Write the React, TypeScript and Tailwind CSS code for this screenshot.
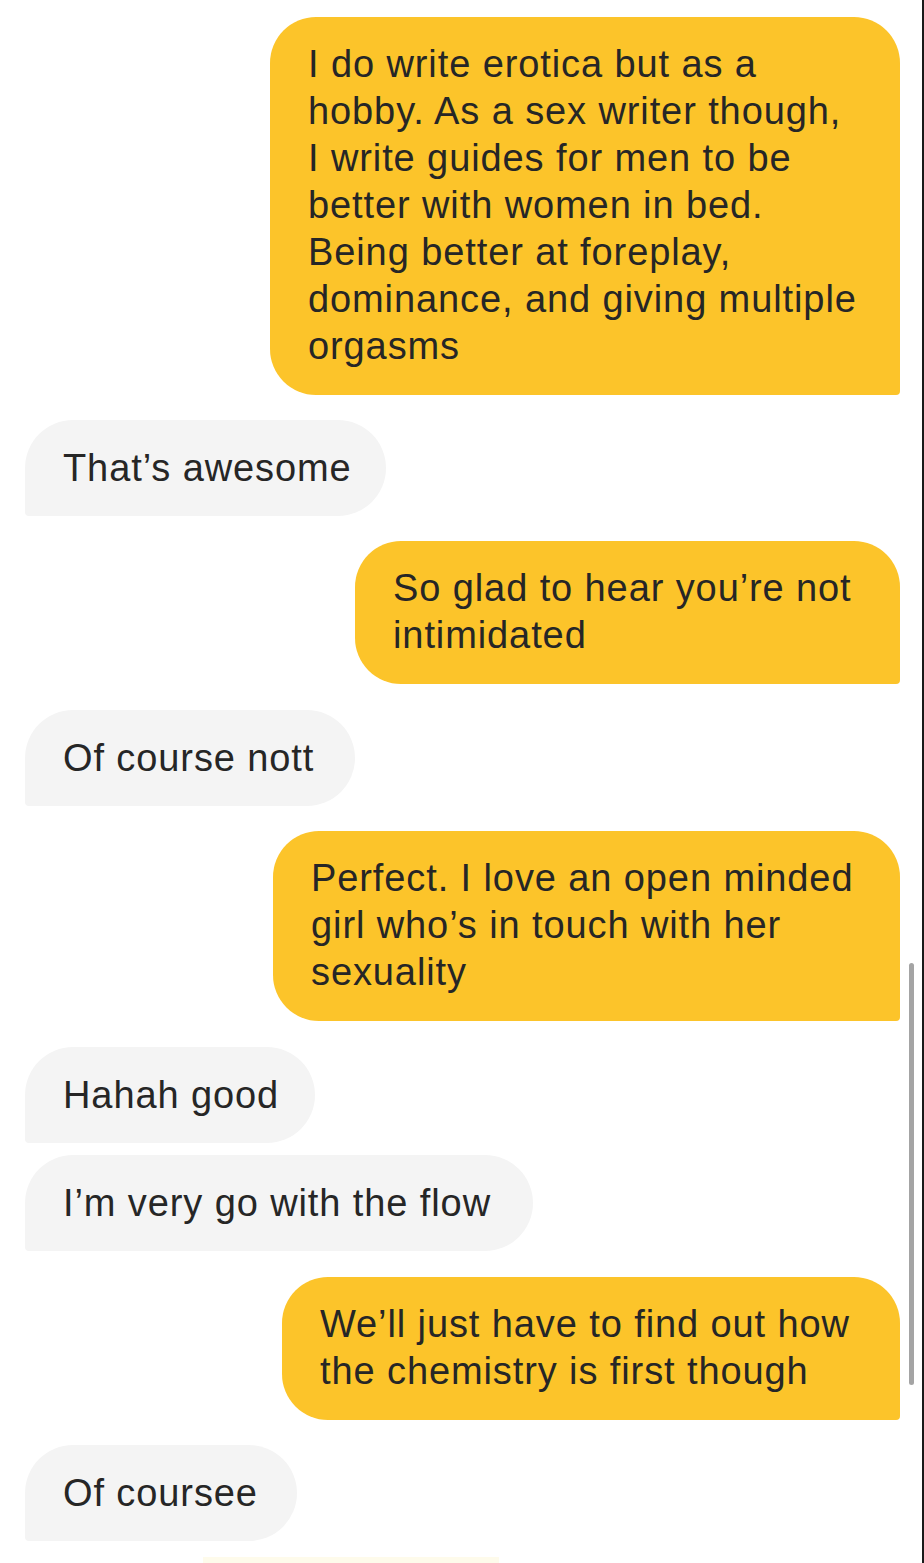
import React from 'react';

type Msg = {
  from: 'me' | 'them';
  lines: string[];
  width: number;
  gap: string;
};

const messages: Msg[] = [
  {
    from: 'me',
    lines: [
      'I do write erotica but as a',
      'hobby. As a sex writer though,',
      'I write guides for men to be',
      'better with women in bed.',
      'Being better at foreplay,',
      'dominance, and giving multiple',
      'orgasms',
    ],
    width: 630,
    gap: 'mt-0',
  },
  { from: 'them', lines: ['That\u2019s awesome'], width: 361, gap: 'mt-[25px]' },
  { from: 'me', lines: ['So glad to hear you\u2019re not', 'intimidated'], width: 545, gap: 'mt-[25px]' },
  { from: 'them', lines: ['Of course nott'], width: 330, gap: 'mt-[26px]' },
  {
    from: 'me',
    lines: ['Perfect. I love an open minded', 'girl who\u2019s in touch with her', 'sexuality'],
    width: 627,
    gap: 'mt-[25px]',
  },
  { from: 'them', lines: ['Hahah good'], width: 290, gap: 'mt-[26px]' },
  { from: 'them', lines: ['I\u2019m very go with the flow'], width: 508, gap: 'mt-[12px]' },
  {
    from: 'me',
    lines: ['We\u2019ll just have to find out how', 'the chemistry is first though'],
    width: 618,
    gap: 'mt-[26px]',
  },
  { from: 'them', lines: ['Of coursee'], width: 272, gap: 'mt-[25px]' },
];

function Bubble({ msg }: { msg: Msg }) {
  const mine = msg.from === 'me';
  return (
    <div
      className={`${msg.gap} ${
        mine
          ? 'self-end mr-[24px] bg-[#fcc42a] rounded-[46px] rounded-br-[4px] pt-[24px] pb-[25px]'
          : 'self-start ml-[25px] bg-[#f4f4f4] rounded-[48px] rounded-bl-[4px] py-[24.5px]'
      } pl-[38px] pr-[10px] text-[38px] tracking-[0.9px] leading-[47px] text-[#262626] whitespace-nowrap`}
      style={{ width: msg.width }}
    >
      {msg.lines.map((line, i) => (
        <div key={i}>{line}</div>
      ))}
    </div>
  );
}

export default function App() {
  return (
    <div
      className="relative w-[924px] h-[1563px] overflow-hidden bg-white flex flex-col pt-[17px]"
      style={{ fontFamily: '"Liberation Sans", Arial, sans-serif' }}
    >
      {messages.map((m, i) => (
        <Bubble key={i} msg={m} />
      ))}

      {/* edge of the next bubble peeking in */}
      <div className="mt-[16px] ml-[203px] w-[296px] h-[6px] bg-[#fefbeb]" />

      {/* scroll indicator */}
      <div className="absolute right-[10px] top-[963px] w-[5px] h-[422px] rounded-full bg-[#a4a4a4]" />
      <div className="absolute right-0 top-0 w-[2px] h-full bg-[#1a1a1a]" />
    </div>
  );
}
